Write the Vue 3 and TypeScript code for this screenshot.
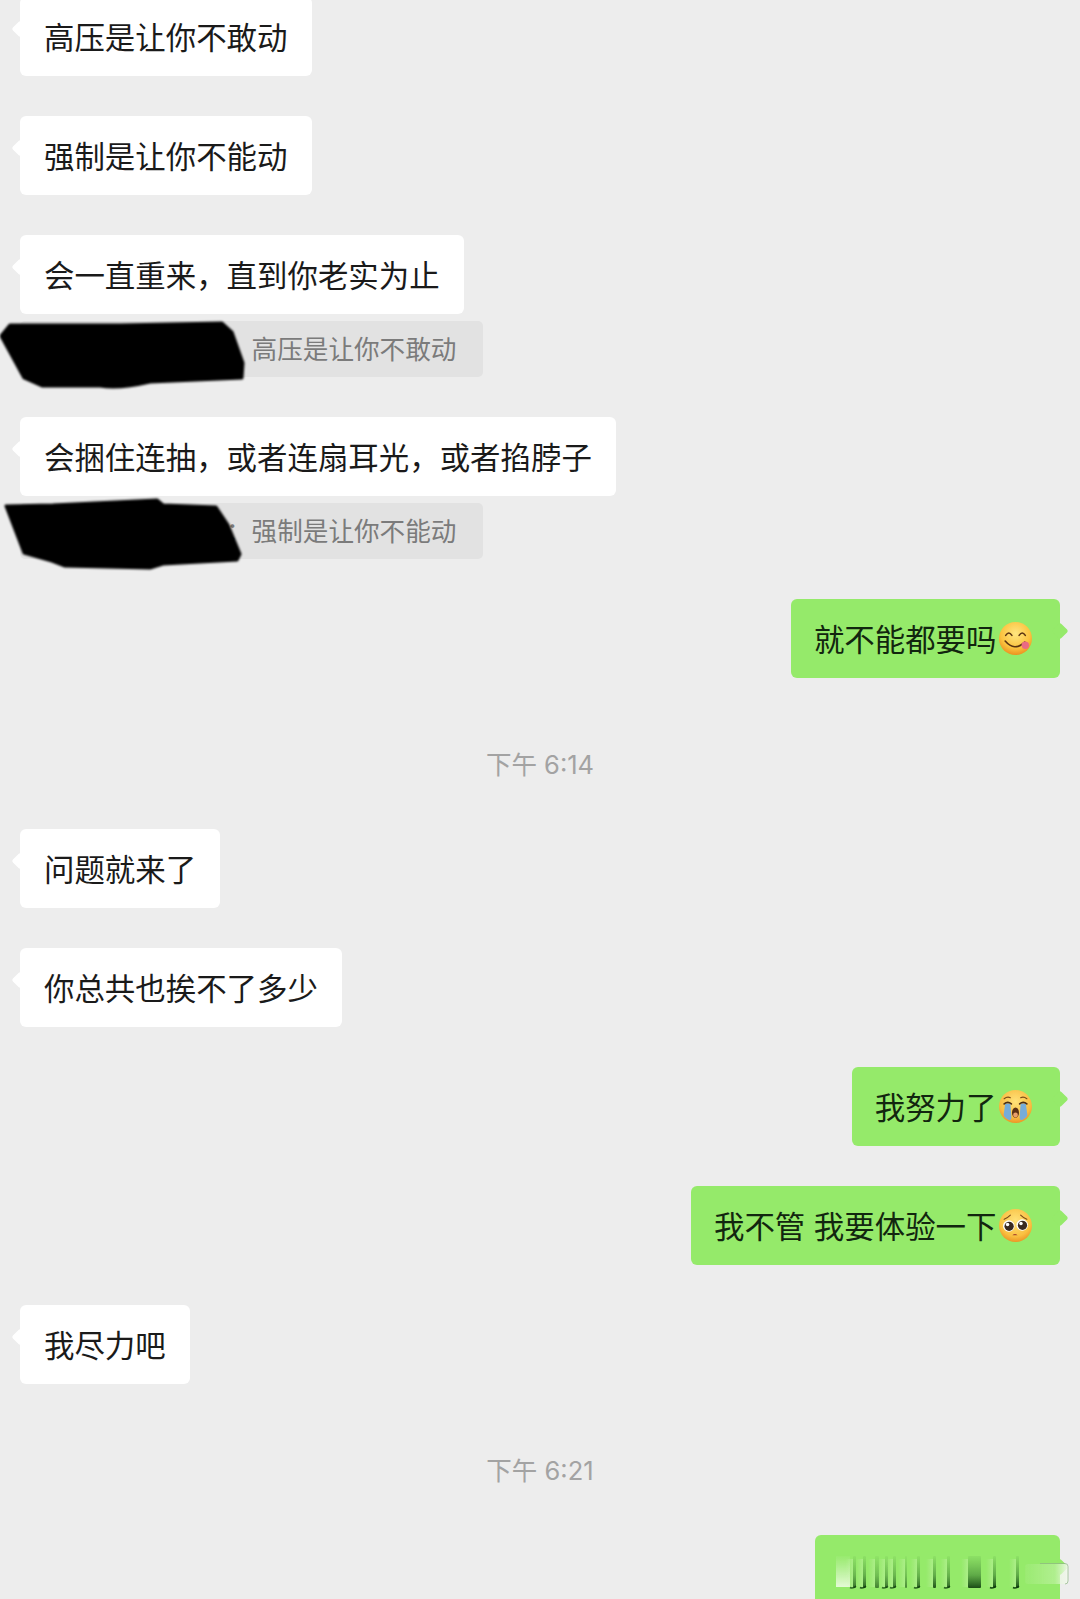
<script setup lang="ts">
type Row =
  | { kind: 'in'; text: string; quote?: string; blob?: { view: string; d: string } }
  | { kind: 'out'; text: string; emoji?: 'yum' | 'cry' | 'plead'; smear?: boolean }
  | { kind: 'time'; text: string }

const rows: Row[] = [
  { kind: 'in', text: '高压是让你不敢动' },
  { kind: 'in', text: '强制是让你不能动' },
  {
    kind: 'in',
    text: '会一直重来，直到你老实为止',
    quote: '：高压是让你不敢动',
    blob: {
      view: '0 310 260 90',
      d: 'M1 335 L10 324 L120 324 L222 322 L232 331 L243 362 L242 377 L150 381 Q120 388 100 385 L42 385 L24 377 Z',
    },
  },
  {
    kind: 'in',
    text: '会捆住连抽，或者连扇耳光，或者掐脖子',
    quote: '：强制是让你不能动',
    blob: {
      view: '0 493 260 90',
      d: 'M6 506 L53 505 L157 500 L163 505 L216 507 L228 525 L240 554 L237 560 L163 564 L150 568 L65 566 L52 561 L24 553 Z',
    },
  },
  { kind: 'out', text: '就不能都要吗', emoji: 'yum' },
  { kind: 'time', text: '下午 6:14' },
  { kind: 'in', text: '问题就来了' },
  { kind: 'in', text: '你总共也挨不了多少' },
  { kind: 'out', text: '我努力了', emoji: 'cry' },
  { kind: 'out', text: '我不管 我要体验一下', emoji: 'plead' },
  { kind: 'in', text: '我尽力吧' },
  { kind: 'time', text: '下午 6:21' },
  { kind: 'out', text: '', smear: true },
]

const streaks = [
  { x: 18, w: 3, o: 0.7, tick: true },
  { x: 28, w: 3, o: 0.8, tick: true },
  { x: 40, w: 4, o: 0.6, tick: false },
  { x: 50, w: 3, o: 0.7, tick: true },
  { x: 58, w: 3, o: 0.7, tick: true },
  { x: 70, w: 2, o: 0.55, tick: false },
  { x: 82, w: 3, o: 0.75, tick: true },
  { x: 98, w: 3, o: 0.85, tick: false },
  { x: 112, w: 3, o: 0.75, tick: true },
  { x: 133, w: 13, o: 0.9, tick: false },
  { x: 158, w: 3, o: 0.9, tick: true },
  { x: 181, w: 3, o: 0.9, tick: true },
]
</script>

<template>
  <div class="chat">
    <template v-for="(row, i) in rows" :key="i">
      <div v-if="row.kind === 'time'" class="time">{{ row.text }}</div>

      <div v-else-if="row.kind === 'in'" class="incoming">
        <div class="bubble white">{{ row.text }}</div>
        <div v-if="row.quote" class="quote">
          {{ row.quote }}
          <svg class="blob" width="260" height="90" :viewBox="row.blob?.view" aria-hidden="true">
            <path :d="row.blob?.d" fill="#000" stroke="#000" stroke-width="3" stroke-linejoin="round" />
          </svg>
        </div>
      </div>

      <div v-else class="outgoing">
        <div class="bubble green" :class="{ cut: row.smear }">
          <span>{{ row.text }}</span>

          <svg v-if="row.emoji === 'yum'" class="emoji" width="33" height="33" viewBox="0 0 32 32" aria-hidden="true">
            <defs>
              <radialGradient id="faceYum" cx="50%" cy="35%" r="68%">
                <stop offset="0" stop-color="#ffe680" />
                <stop offset="0.65" stop-color="#fbc33f" />
                <stop offset="1" stop-color="#e88a1c" />
              </radialGradient>
            </defs>
            <circle cx="16" cy="16" r="16" fill="url(#faceYum)" />
            <path d="M6.5 13 Q9.5 8.5 12.5 13 M19.5 13 Q22.5 8.5 25.5 13" fill="none" stroke="#5b3411" stroke-width="1.5" stroke-linecap="round" />
            <path d="M6 18.5 Q15 29 25 19.5" fill="none" stroke="#5b3411" stroke-width="1.6" stroke-linecap="round" />
            <circle cx="25.5" cy="22.5" r="3.6" fill="#ea6a84" />
          </svg>

          <svg v-else-if="row.emoji === 'cry'" class="emoji" width="33" height="33" viewBox="0 0 32 32" aria-hidden="true">
            <defs>
              <radialGradient id="faceCry" cx="50%" cy="35%" r="68%">
                <stop offset="0" stop-color="#ffe27a" />
                <stop offset="0.7" stop-color="#f9bd41" />
                <stop offset="1" stop-color="#e98f22" />
              </radialGradient>
            </defs>
            <circle cx="16" cy="16" r="16" fill="url(#faceCry)" />
            <path d="M5 8.5 Q8 6 11 7.5 M21 7.5 Q24 6 27 8.5" fill="none" stroke="#7a4a18" stroke-width="1.1" stroke-linecap="round" />
            <path d="M6 13 L11 13 L12 26 Q12 30 9.5 29 Q5 27 4.5 24 Z M21 13 L26 13 L27.5 24 Q27 27 22.5 29 Q20 30 20 26 Z" fill="#76acd9" />
            <path d="M5 13.5 Q8.5 10.5 12 13.5 M20 13.5 Q23.5 10.5 27 13.5" fill="none" stroke="#4e2f14" stroke-width="1.5" stroke-linecap="round" />
            <ellipse cx="16" cy="22" rx="3.4" ry="5" fill="#5a2f14" />
            <ellipse cx="16" cy="24.2" rx="2.3" ry="2.4" fill="#e9a06a" />
          </svg>

          <svg v-else-if="row.emoji === 'plead'" class="emoji" width="33" height="33" viewBox="0 0 32 32" aria-hidden="true">
            <defs>
              <radialGradient id="facePlead" cx="50%" cy="35%" r="68%">
                <stop offset="0" stop-color="#ffe27a" />
                <stop offset="0.7" stop-color="#fac040" />
                <stop offset="1" stop-color="#e98f22" />
              </radialGradient>
            </defs>
            <circle cx="16" cy="16" r="16" fill="url(#facePlead)" />
            <path d="M5 10 Q8 9 11 6 M21 6 Q24 9 27 10" fill="none" stroke="#7a4a18" stroke-width="1.1" stroke-linecap="round" />
            <circle cx="9.5" cy="16.5" r="5.6" fill="#fff" />
            <circle cx="22.5" cy="15.5" r="5.6" fill="#fff" />
            <circle cx="9.8" cy="16.8" r="4.5" fill="#3a2a22" />
            <circle cx="22.8" cy="15.8" r="4.5" fill="#3a2a22" />
            <circle cx="8.3" cy="15" r="1.7" fill="#fff" />
            <circle cx="21.3" cy="14" r="1.7" fill="#fff" />
            <path d="M13 25.5 Q15.5 23 18 25.5 Z" fill="#a8442c" />
          </svg>

          <svg v-if="row.smear" class="smear" width="260" height="44" viewBox="0 0 260 44" aria-hidden="true">
            <defs>
              <linearGradient id="darkStreak" x1="0" y1="0" x2="0" y2="1">
                <stop offset="0" stop-color="#2b6e2b" stop-opacity="0.08" />
                <stop offset="0.6" stop-color="#1c5a1c" stop-opacity="0.5" />
                <stop offset="1" stop-color="#0c3a0c" stop-opacity="1" />
              </linearGradient>
              <linearGradient id="palePatch" x1="0" y1="0" x2="0" y2="1">
                <stop offset="0" stop-color="#dff7ce" stop-opacity="0.05" />
                <stop offset="1" stop-color="#e9fbdc" stop-opacity="0.95" />
              </linearGradient>
              <linearGradient id="halo" x1="0" y1="0" x2="1" y2="0">
                <stop offset="0" stop-color="#d6f5bf" stop-opacity="0" />
                <stop offset="1" stop-color="#d6f5bf" stop-opacity="0.35" />
              </linearGradient>
              <linearGradient id="fade" x1="0" y1="0" x2="1" y2="0">
                <stop offset="0" stop-color="#e4f8d4" stop-opacity="0.08" />
                <stop offset="0.7" stop-color="#e4f8d4" stop-opacity="0.35" />
                <stop offset="1" stop-color="#f2f7ee" stop-opacity="0.95" />
              </linearGradient>
            </defs>
            <rect x="1" y="3" width="14" height="31" fill="url(#palePatch)" />
            <g v-for="s in streaks" :key="s.x">
              <rect :x="s.x - 7" y="6" width="7" height="28" fill="url(#halo)" />
              <rect :x="s.x" y="3" :width="s.w" height="32" rx="1" fill="url(#darkStreak)" :opacity="s.o" />
              <path v-if="s.tick" :d="`M${s.x - 3} 34.5 Q${s.x} 36 ${s.x + s.w} 33`" fill="none" stroke="#0c3a0c" stroke-width="1.4" :opacity="s.o" />
            </g>
            <rect x="190" y="11" width="43" height="20" rx="3" fill="url(#fade)" />
            <path d="M205 10.5 H230 Q233 10.5 233 13.5 V28 Q233 31 230 31" fill="none" stroke="#8fb486" stroke-opacity="0.7" stroke-width="1" />
          </svg>
        </div>
      </div>
    </template>
  </div>
</template>

<style scoped>
.chat {
  box-sizing: border-box;
  width: 1080px;
  height: 1599px;
  overflow: hidden;
  background: #ededed;
  padding: 0 20px;
  display: flex;
  flex-direction: column;
  gap: 40px;
  font-family: Inter, "Noto Sans CJK SC", sans-serif;
}

.chat > :first-child {
  margin-top: -3px;
}

.incoming {
  display: flex;
  flex-direction: column;
  align-items: flex-start;
  gap: 7px;
}

.outgoing {
  display: flex;
  justify-content: flex-end;
}

.bubble {
  position: relative;
  box-sizing: border-box;
  height: 79px;
  display: flex;
  align-items: center;
  border-radius: 6px;
  font-size: 30.45px;
  line-height: 43px;
  white-space: pre;
  flex: none;
}

.bubble::before {
  content: "";
  position: absolute;
  top: 26px;
  width: 12px;
  height: 12px;
  border-radius: 2px;
  background: inherit;
  transform: rotate(45deg);
}

.white {
  background: #ffffff;
  color: #1a1a1a;
  padding: 4px 24px 0 24px;
}

.white::before {
  left: -6px;
}

.green {
  background: #95ea6a;
  color: #12260f;
  padding: 4px 28px 0 23px;
}

.green::before {
  right: -6px;
}

.cut {
  width: 245px;
}

.emoji {
  margin: -4px 0 0 2.5px;
  flex: none;
}

.smear {
  position: absolute;
  left: 20px;
  top: 18px;
  filter: blur(0.6px);
}

.quote {
  position: relative;
  box-sizing: border-box;
  height: 56px;
  width: 463px;
  padding: 0 0 3px 206px;
  display: flex;
  align-items: center;
  border-radius: 5px;
  background: #e2e2e2;
  color: #7b7b7b;
  font-size: 25.6px;
  white-space: pre;
}

.blob {
  position: absolute;
  left: -20px;
  top: -10px;
  filter: blur(1.2px);
}

.time {
  margin: 32px 0 9px;
  height: 30px;
  line-height: 30px;
  text-align: center;
  font-size: 25.5px;
  color: #a3a3a3;
}
</style>

<style>
html,
body {
  background: #ededed;
}
</style>
